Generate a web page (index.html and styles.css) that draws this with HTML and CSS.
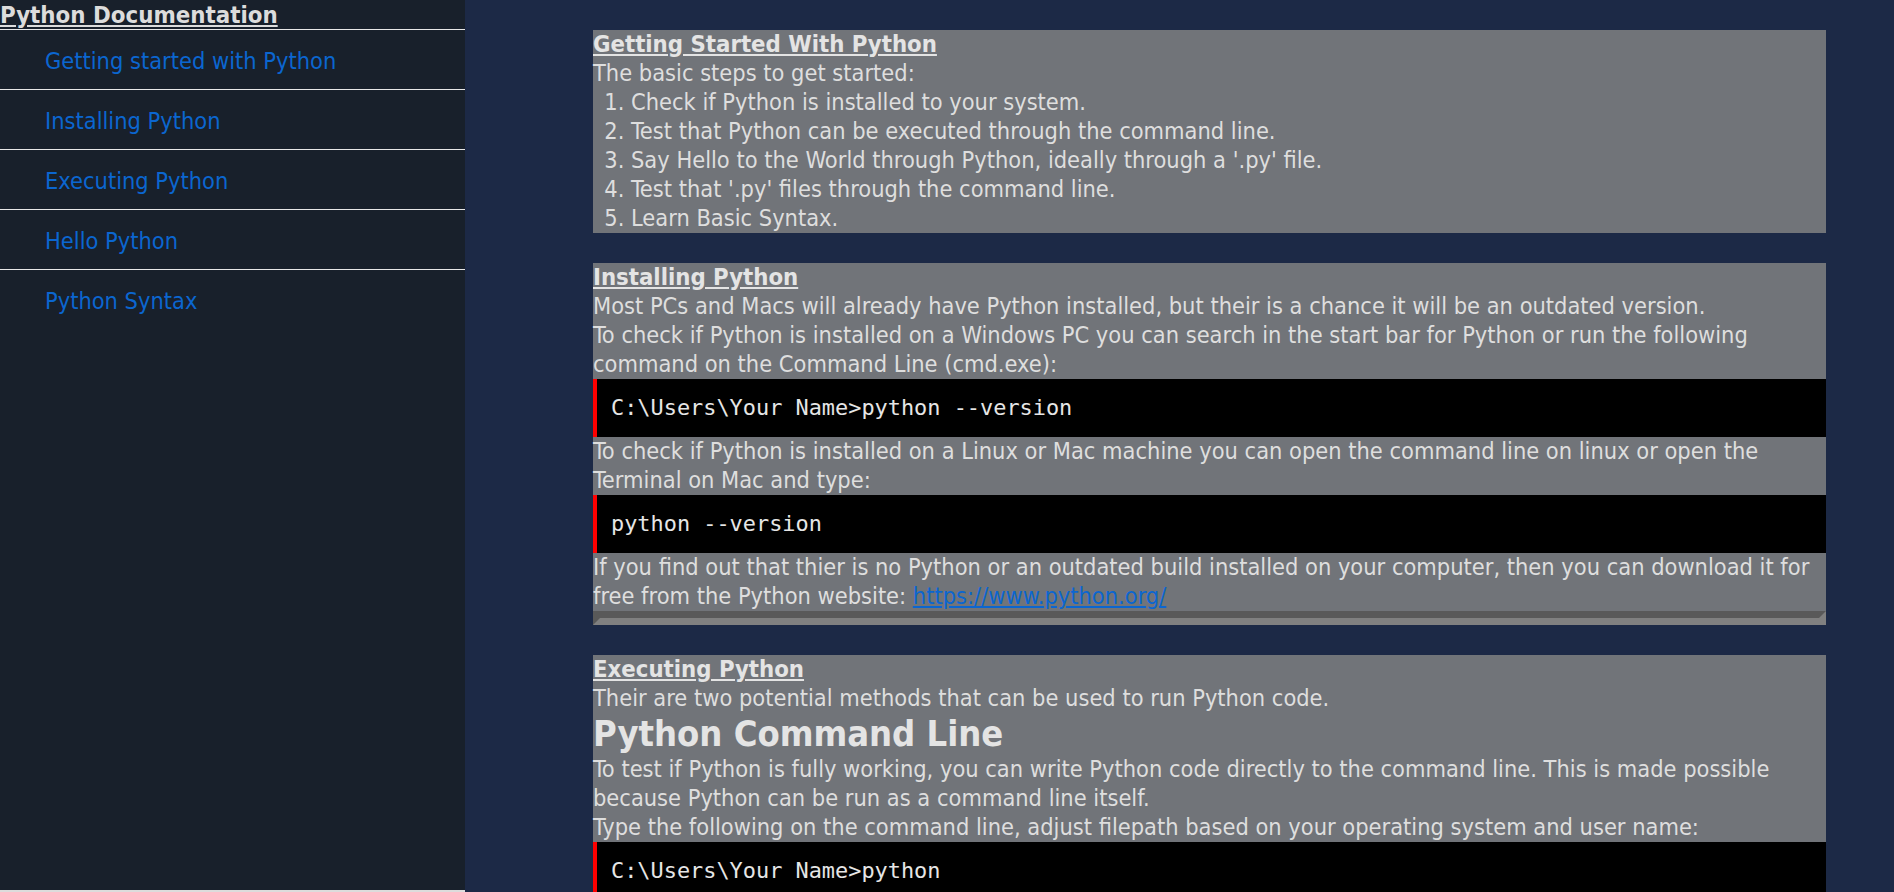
FILE: index.html
```html
<!DOCTYPE html>
<html lang="en">
<head>
<meta charset="utf-8">
<title>Python Documentation</title>
<link rel="stylesheet" href="styles.css">
</head>
<body>
<nav class="sidebar" id="navbar">
  <header class="side-title">Python Documentation</header>
  <ul class="nav-list">
    <li class="nav-item"><a class="nav-link" href="#Getting_Started_With_Python">Getting started with Python</a></li>
    <li class="nav-item"><a class="nav-link" href="#Installing_Python">Installing Python</a></li>
    <li class="nav-item"><a class="nav-link" href="#Executing_Python">Executing Python</a></li>
    <li class="nav-item"><a class="nav-link" href="#Hello_Python">Hello Python</a></li>
    <li class="nav-item"><a class="nav-link" href="#Python_Syntax">Python Syntax</a></li>
  </ul>
</nav>
<main class="main" id="main-doc">
  <section class="card" id="Getting_Started_With_Python">
    <header class="card-title">Getting Started With Python</header>
    <p class="text">The basic steps to get started:</p>
    <ol class="steps">
      <li>Check if Python is installed to your system.</li>
      <li>Test that Python can be executed through the command line.</li>
      <li>Say Hello to the World through Python, ideally through a '.py' file.</li>
      <li>Test that '.py' files through the command line.</li>
      <li>Learn Basic Syntax.</li>
    </ol>
  </section>

  <section class="card" id="Installing_Python">
    <header class="card-title">Installing Python</header>
    <p class="text">Most PCs and Macs will already have Python installed, but their is a chance it will be an outdated version.</p>
    <p class="text">To check if Python is installed on a Windows PC you can search in the start bar for Python or run the following command on the Command Line (cmd.exe):</p>
    <pre class="code"><code>C:\Users\Your Name&gt;python --version</code></pre>
    <p class="text">To check if Python is installed on a Linux or Mac machine you can open the command line on linux or open the Terminal on Mac and type:</p>
    <pre class="code"><code>python --version</code></pre>
    <p class="text">If you find out that thier is no Python or an outdated build installed on your computer, then you can download it for free from the Python website: <a class="link" href="https://www.python.org/">https://www.python.org/</a></p>
    <hr class="rule">
  </section>

  <section class="card" id="Executing_Python">
    <header class="card-title">Executing Python</header>
    <p class="text">Their are two potential methods that can be used to run Python code.</p>
    <h1 class="sub-title">Python Command Line</h1>
    <p class="text">To test if Python is fully working, you can write Python code directly to the command line. This is made possible because Python can be run as a command line itself.</p>
    <p class="text">Type the following on the command line, adjust filepath based on your operating system and user name:</p>
    <pre class="code"><code>C:\Users\Your Name&gt;python</code></pre>
    <p class="text">From there you can write any Python code you wish, such as printing "Hello, World!".</p>
    <hr class="rule">
  </section>
</main>
</body>
</html>
```

FILE: styles.css
```css
html, body {
  margin: 0;
  padding: 0;
}

body {
  display: flex;
  align-items: flex-start;
  background: #dcdcdc;
  font-family: Tahoma, "DejaVu Sans Condensed", "DejaVu Sans", sans-serif;
  font-size: 23.4px;
  line-height: 29px;
  color: #dedede;
}

.sidebar {
  position: sticky;
  top: 0;
  flex: 0 0 465px;
  width: 465px;
  height: calc(100vh - 2px);
  background: #18202b;
}

.side-title {
  padding-top: 2px;
  font-size: 23.8px;
  font-weight: bold;
  text-decoration: underline;
  color: #dcdcdc;
  line-height: 27px;
}

.nav-list {
  list-style: none;
  margin: 0;
  padding: 0;
}

.nav-item {
  border-top: 1px solid #e8e8e8;
}

.nav-link {
  display: block;
  padding: 17px 0 13px 45px;
  color: #0b66d0;
  text-decoration: none;
}

.main {
  flex: 1 1 auto;
  min-height: 1400px;
  background: #1c2946;
  padding: 30px 68px 40px 128px;
  display: flex;
  flex-direction: column;
  gap: 30px;
}

.card {
  background: #717479;
}

.card-title {
  font-size: 23.7px;
  font-weight: bold;
  text-decoration: underline;
  color: #e4e4e4;
}

.text {
  margin: 0;
}

.steps {
  margin: 0;
  padding-left: 38px;
}

.sub-title {
  margin: 0;
  font-size: 36px;
  line-height: 42px;
  font-weight: bold;
  color: #e4e4e4;
}

.code {
  margin: 0;
  background: #000;
  border-left: 4px solid #ff0000;
  padding: 15px 14px;
  font-family: "DejaVu Sans Mono", "Liberation Mono", monospace;
  font-size: 21.9px;
  line-height: 28px;
  color: #e6e6e6;
}

.link {
  color: #0b66d0;
  text-decoration: underline;
}

.rule {
  margin: 0;
  height: 0;
  border-style: solid;
  border-width: 7px;
  border-color: #595959 #808080 #808080 #595959;
}
```
